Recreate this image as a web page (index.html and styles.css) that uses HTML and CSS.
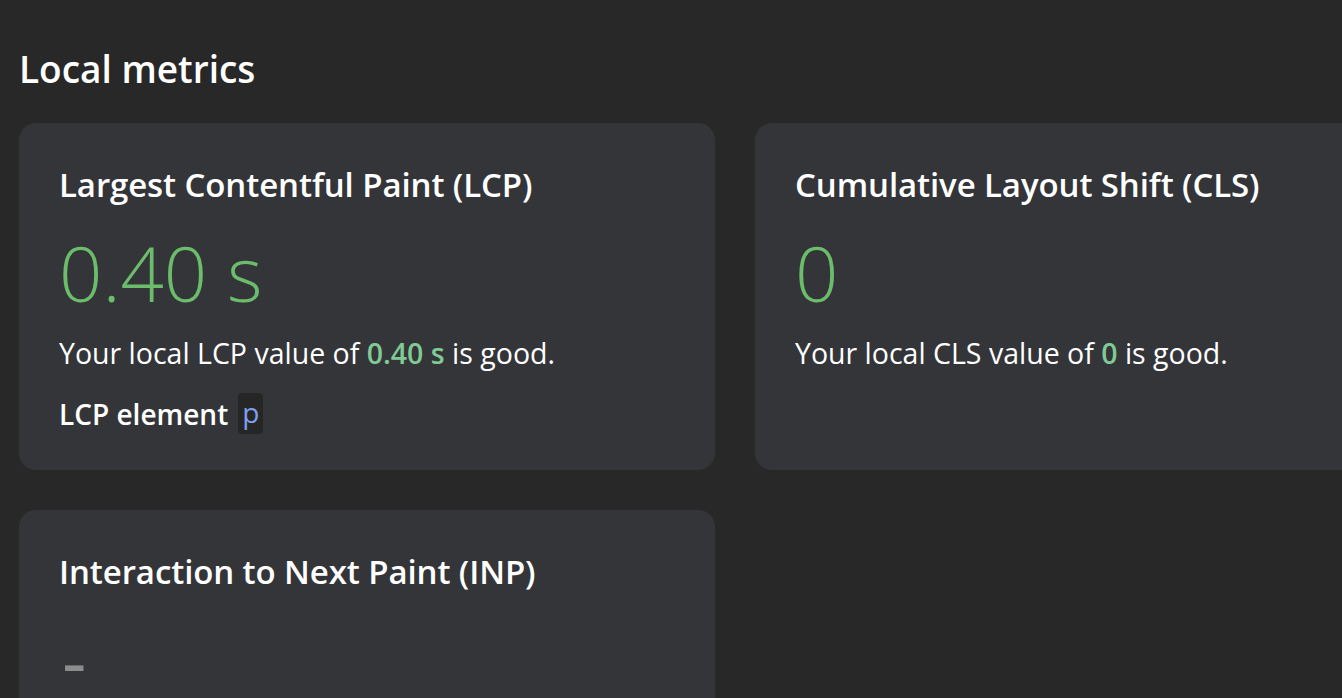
FILE: index.html
```html
<!DOCTYPE html>
<html>
<head>
<meta charset="utf-8">
<link rel="stylesheet" href="styles.css">
</head>
<body>
<main class="page">
  <h1 class="title">Local metrics</h1>
  <div class="grid">
    <section class="card">
      <h2 class="card-title">Largest Contentful Paint (LCP)</h2>
      <div class="value good">0.40 s</div>
      <p class="desc">Your local LCP value of <span class="inline-good">0.40 s</span> is good.</p>
      <div class="element-row"><span class="element-label">LCP element</span><code class="node">p</code></div>
    </section>
    <section class="card">
      <h2 class="card-title">Cumulative Layout Shift (CLS)</h2>
      <div class="value good">0</div>
      <p class="desc">Your local CLS value of <span class="inline-good">0</span> is good.</p>
    </section>
    <section class="card">
      <h2 class="card-title">Interaction to Next Paint (INP)</h2>
      <div class="value empty">-</div>
    </section>
  </div>
</main>
</body>
</html>
```
FILE: styles.css
```css
html, body {
  margin: 0;
  padding: 0;
  background: #282828;
  overflow: hidden;
}
body {
  font-family: "Open Sans", "Noto Sans", sans-serif;
  color: #e8eaed;
  width: 1342px;
  height: 698px;
}
.page {
  padding: 44px 0 0 19px;
}
.title {
  margin: 0;
  font-size: 37px;
  font-weight: 600;
  line-height: 50px;
  color: #ffffff;
}
.grid {
  margin-top: 29px;
  display: grid;
  grid-template-columns: 696px 696px;
  column-gap: 40px;
  row-gap: 40px;
}
.card {
  background: #343539;
  border-radius: 17px;
  padding: 40px 40px 30px 40px;
  height: 347px;
  box-sizing: border-box;
}
.card-title {
  margin: 0;
  font-size: 33px;
  font-weight: 600;
  line-height: 44px;
  color: #ffffff;
  letter-spacing: -0.1px;
}
.value {
  font-size: 76px;
  font-weight: 300;
  line-height: 100px;
  margin-top: 16px;
}
.good { color: #6bbd6b; }
.empty {
  color: #8c8c8c;
  font-weight: 400;
  padding-left: 3px;
}
.desc {
  margin: 12px 0 0 0;
  font-size: 28.5px;
  line-height: 36px;
  color: #ffffff;
}
.inline-good {
  color: #81c995;
  font-weight: 600;
}
.element-row {
  margin-top: 22px;
  display: flex;
  align-items: center;
  gap: 10px;
  font-size: 28px;
  font-weight: 600;
  color: #ffffff;
  line-height: 36px;
}
.node {
  font-family: "Open Sans", "Noto Sans", sans-serif;
  font-weight: 400;
  font-size: 28px;
  color: #7f9ff0;
  background: #262626;
  border-radius: 4px;
  padding: 0 4px;
  height: 41px;
  line-height: 38px;
}
```
